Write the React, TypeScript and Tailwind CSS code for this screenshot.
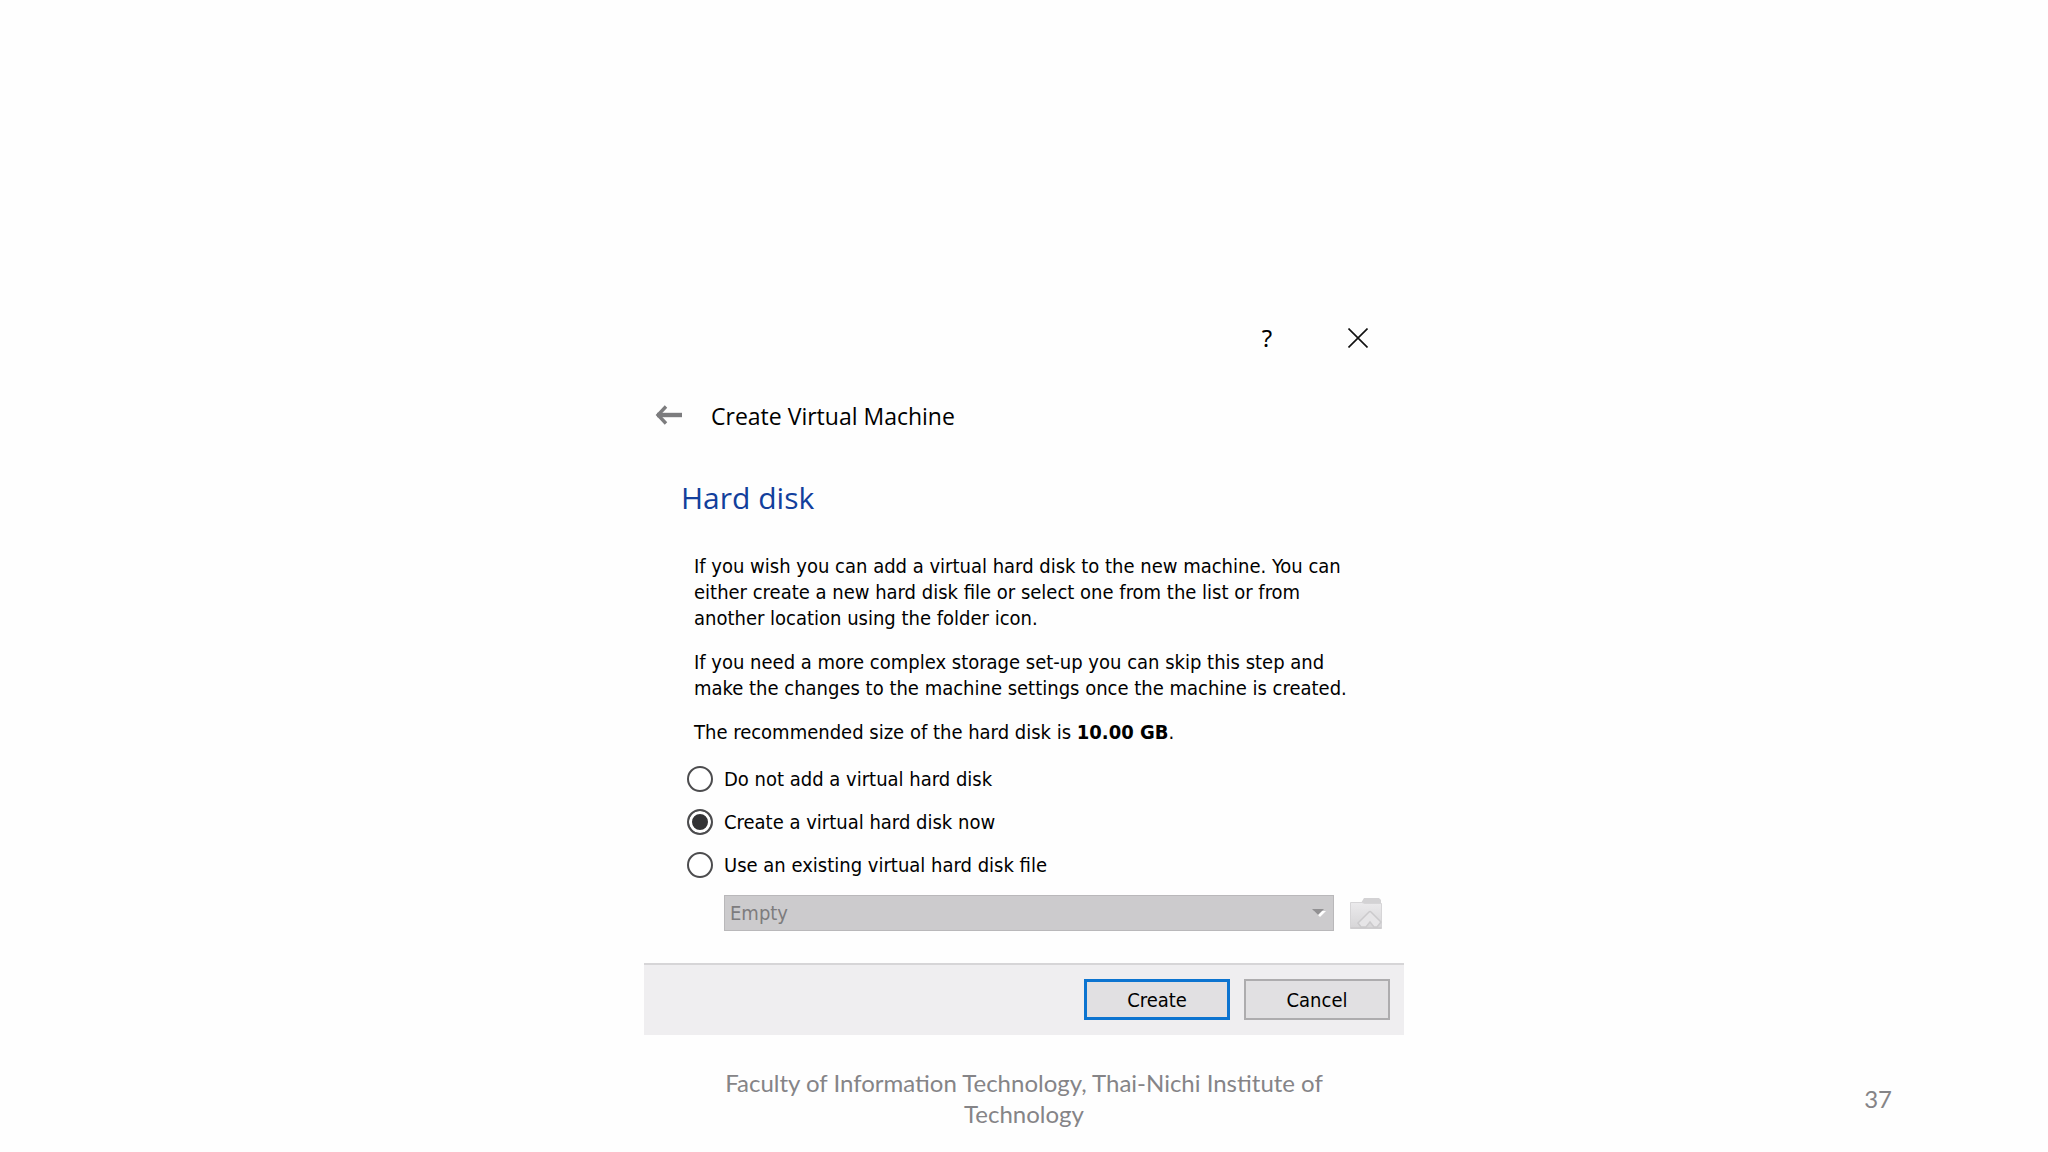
import { useState } from "react";

type DiskOption = {
  id: string;
  label: string;
};

const diskOptions: DiskOption[] = [
  { id: "none", label: "Do not add a virtual hard disk" },
  { id: "create", label: "Create a virtual hard disk now" },
  { id: "existing", label: "Use an existing virtual hard disk file" },
];

const BackArrow = () => (
  <svg width="28" height="22" viewBox="0 0 28 22" fill="none" stroke="#7c7c7e">
    <path d="M11 1.5 L3 10 L11 18.5" strokeWidth="3.4" />
    <path d="M2 10 H27" strokeWidth="4.4" />
  </svg>
);

const CloseIcon = () => (
  <svg width="20" height="20" viewBox="0 0 20 20" stroke="#111" strokeWidth="1.6">
    <path d="M0.5 0.5 L19.5 19.5 M19.5 0.5 L0.5 19.5" />
  </svg>
);

const FolderIcon = () => (
  <svg width="32" height="32" viewBox="0 0 32 32" fill="none">
    <defs>
      <linearGradient id="folder" x1="0" y1="0" x2="0" y2="1">
        <stop offset="0" stopColor="#ebeaec" />
        <stop offset="1" stopColor="#d6d5d7" />
      </linearGradient>
    </defs>
    <path d="M11 6 L14 1 H29 L31 3 V10 H11 Z" fill="#d3d2d4" />
    <path d="M0.5 5.5 H12 L15 6.5 H31.5 V31.5 H0.5 Z" fill="url(#folder)" stroke="#d6d5d7" />
    <path
      d="M8 26 L19 15 Q20 14 21 15 L31 25 L27 30 H24 L20 25 L16 30 H11 Z"
      fill="#e6e5e7"
      stroke="#cbcacc"
      strokeWidth="1.5"
    />
    <path d="M0.5 31 H31.5" stroke="#c6c5c7" />
  </svg>
);

const Dialog = () => {
  const [selected, setSelected] = useState("create");

  return (
    <section className="mx-auto w-full max-w-[760px] font-['DejaVu_Sans_Condensed','Noto_Sans',sans-serif] text-[20px] leading-[26px] text-black">
      <div className="flex h-12 items-center justify-end gap-[75px] pr-9">
        <button aria-label="Help" className="w-3 text-center font-['Noto_Sans',sans-serif] text-[24px] leading-8">
          ?
        </button>
        <button aria-label="Close">
          <CloseIcon />
        </button>
      </div>

      <header className="mt-[30px] flex h-12 items-center gap-7 pl-[11px]">
        <button aria-label="Back">
          <BackArrow />
        </button>
        <h1 className="font-['Open_Sans',sans-serif] text-[23px] leading-8">Create Virtual Machine</h1>
      </header>

      <h2 className="mt-[38px] pl-[37px] font-['Open_Sans',sans-serif] text-[30px] leading-10 text-[#123f9c]">
        Hard disk
      </h2>

      <div className="mt-[35px] flex flex-col gap-[18px] pl-[50px]">
        <p>
          If you wish you can add a virtual hard disk to the new machine. You can
          <br />
          either create a new hard disk file or select one from the list or from
          <br />
          another location using the folder icon.
        </p>
        <p>
          If you need a more complex storage set-up you can skip this step and
          <br />
          make the changes to the machine settings once the machine is created.
        </p>
        <p>
          The recommended size of the hard disk is <b>10.00 GB</b>.
        </p>
      </div>

      <fieldset className="mt-[21px] flex flex-col gap-[17px] pl-[43px]">
        {diskOptions.map((option) => (
          <label key={option.id} className="flex items-center gap-[11px]">
            <input
              type="radio"
              name="disk"
              checked={selected === option.id}
              onChange={() => setSelected(option.id)}
              className="size-[26px] appearance-none rounded-full border-2 border-[#4c4c4e] bg-white checked:bg-[#333335] checked:shadow-[inset_0_0_0_3px_white]"
            />
            {option.label}
          </label>
        ))}
      </fieldset>

      <div className="mt-[17px] flex items-center gap-4 pl-20 pr-[22px]">
        <div className="relative grow">
          <select
            aria-label="Hard disk file"
            disabled
            className="block h-9 w-full appearance-none border border-[#b9b8ba] bg-[#cccbcd] px-[5px] text-[#7d7c7e] opacity-100"
          >
            <option>Empty</option>
          </select>
          <svg className="absolute right-2 top-[14px]" width="14" height="9" viewBox="0 0 14 9">
            <path d="M2 2 H14 L8 8 Z" fill="#fff" />
            <path d="M0 0 H12 L6 6 Z" fill="#929193" />
          </svg>
        </div>
        <button aria-label="Choose a virtual hard disk file" disabled>
          <FolderIcon />
        </button>
      </div>

      <div className="mt-8 flex justify-end gap-[14px] border-t-2 border-[#d6d5d7] bg-[#efeef0] pb-[15px] pr-[14px] pt-[14px]">
        <button className="h-[41px] w-[146px] border-3 border-[#0c74d0] bg-[#e1e0e2]">Create</button>
        <button className="h-[41px] w-[146px] border-2 border-[#adacae] bg-[#e1e0e2]">Cancel</button>
      </div>
    </section>
  );
};

const App = () => {
  return (
    <main className="flex min-h-screen flex-col justify-end bg-[#fefefe]">
      <Dialog />
      <footer className="mt-8 grid grid-cols-[1fr_608px_1fr] items-center pb-[23px] font-['Lato',sans-serif] text-[24px] leading-[31px] text-[#858487]">
        <p className="col-start-2 text-center">
          Faculty of Information Technology, Thai-Nichi Institute of Technology
        </p>
        <p className="pr-[156px] text-right">37</p>
      </footer>
    </main>
  );
};

export default App;
